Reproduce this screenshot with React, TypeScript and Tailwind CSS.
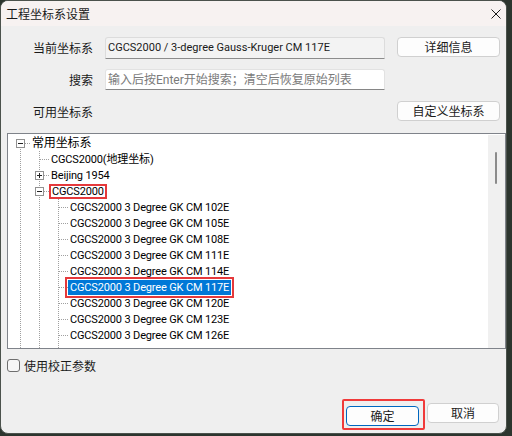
import type { ReactNode } from 'react';

// Tree rows of the coordinate-system picker
type Node = {
  level: number;
  text: string;
  kind: 'open' | 'closed' | 'leaf';
  cjk?: boolean;
  marked?: boolean;
  selected?: boolean;
};

const zones = ['102E', '105E', '108E', '111E', '114E', '117E', '120E', '123E', '126E'];

const rows: Node[] = [
  { level: 0, text: '常用坐标系', kind: 'open', cjk: true },
  { level: 1, text: 'CGCS2000(地理坐标)', kind: 'leaf' },
  { level: 1, text: 'Beijing 1954', kind: 'closed' },
  { level: 1, text: 'CGCS2000', kind: 'open', marked: true },
  ...zones.map((z) => ({
    level: 2,
    text: `CGCS2000 3 Degree GK CM ${z}`,
    kind: 'leaf' as const,
    selected: z === '117E',
  })),
];

const ui = "font-['Roboto','Noto_Sans_CJK_SC',sans-serif]";
const cjk = "font-['Noto_Sans_CJK_SC',sans-serif]";
const dots = { stroke: '#a0a0a0', strokeWidth: 1, strokeDasharray: '1 1' };

// Dotted guide lines + expander box drawn to the left of each tree label
function Guides({ node, first }: { node: Node; first: boolean }) {
  const w = 22 + 19 * node.level;
  const cx = 12.5 + 19 * node.level;
  return (
    <svg width={w} height={16} className="flex-none" shapeRendering="crispEdges">
      {Array.from({ length: node.level }).map((_, a) => (
        <line key={a} x1={12.5 + 19 * a} y1={0} x2={12.5 + 19 * a} y2={16} {...dots} />
      ))}
      <line x1={cx} y1={first ? 8 : 0} x2={cx} y2={16} {...dots} />
      <line x1={cx} y1={8.5} x2={w} y2={8.5} {...dots} />
      {node.kind !== 'leaf' && (
        <g>
          <rect x={cx - 4} y={4.5} width={8} height={8} fill="#fff" stroke="#919191" />
          <line x1={cx - 2.5} y1={8.5} x2={cx + 2.5} y2={8.5} stroke="#222" />
          {node.kind === 'closed' && <line x1={cx} y1={6} x2={cx} y2={11} stroke="#222" />}
        </g>
      )}
    </svg>
  );
}

function Btn({ children, className = '' }: { children: ReactNode; className?: string }) {
  return (
    <button
      className={`h-[20px] rounded-[4px] border bg-[#fdfdfd] text-[12px] leading-none text-[#1b1b1b] ${cjk} ${className}`}
    >
      {children}
    </button>
  );
}

export default function App() {
  return (
    <div className="h-[436px] w-[512px] bg-[#2c352e]">
      <div className="flex h-[434px] w-[507px] flex-col overflow-hidden rounded-lg border border-[#4b524c] bg-[#efefef]">
        {/* Title bar */}
        <div className="flex h-[25px] flex-none items-center justify-between bg-[#f7f2f1] pl-[5px] pr-[4px]">
          <span className={`text-[12px] leading-none text-[#1a1a1a] ${cjk}`}>工程坐标系设置</span>
          <svg width="10" height="10" viewBox="0 0 10 10" className="mr-[1px]">
            <path d="M0.5 0.5L9.5 9.5M9.5 0.5L0.5 9.5" stroke="#1a1a1a" strokeWidth="1" />
          </svg>
        </div>

        <div className="flex flex-1 flex-col pl-[6px]">
          {/* Current system */}
          <div className="mt-[11px] flex h-[22px] items-center">
            <span className={`w-[86px] text-right text-[12px] text-[#1a1a1a] ${cjk}`}>当前坐标系</span>
            <div
              className={`ml-[12px] flex h-[22px] w-[280px] items-center rounded-t-[3px] border border-[#dcdcdc] border-b-[#8c8c8c] bg-[#f3f3f3] pl-[2px] text-[11px] text-[#1a1a1a] ${ui}`}
            >
              CGCS2000 / 3-degree Gauss-Kruger CM 117E
            </div>
            <Btn className="ml-[12px] w-[103px] self-start border-[#d0d0d0]">详细信息</Btn>
          </div>

          {/* Search */}
          <div className="mt-[10px] flex h-[21px] items-center">
            <span className={`w-[86px] text-right text-[12px] text-[#1a1a1a] ${cjk}`}>搜索</span>
            <div
              className={`ml-[12px] flex h-[21px] w-[280px] items-center rounded-t-[3px] border border-[#e2e2e2] border-b-[#868686] bg-white pl-[2px] text-[12px] text-[#7a7a7a] ${ui}`}
            >
              输入后按Enter开始搜索；清空后恢复原始列表
            </div>
          </div>

          {/* Available systems */}
          <div className="mt-[11px] flex h-[21px] items-center">
            <span className={`w-[86px] text-right text-[12px] text-[#1a1a1a] ${cjk}`}>可用坐标系</span>
            <Btn className="ml-[304px] w-[103px] self-start border-[#d0d0d0]">自定义坐标系</Btn>
          </div>

          {/* Tree */}
          <div className="mt-[11px] flex h-[216px] w-[499px] overflow-hidden border border-[#7f838a] bg-white">
            <div className={`flex-1 overflow-hidden pt-[1px] text-[11px] text-black ${ui}`}>
              {rows.map((node, i) => (
                <div key={i} className="flex h-[16px] items-center">
                  <Guides node={node} first={i === 0} />
                  <span
                    className={`flex h-[15px] items-center whitespace-nowrap px-[2px] leading-none tracking-[-0.15px] ${
                      node.cjk ? 'text-[12px]' : ''
                    } ${node.marked ? 'ring-2 ring-inset ring-[#e5393b] px-[3px] h-[14px]' : ''} ${
                      node.selected ? 'bg-[#0078d7] text-white outline-2 outline-offset-[1px] outline-[#e5393b]' : ''
                    }`}
                  >
                    {node.text}
                  </span>
                </div>
              ))}
              {/* guides continue past the visible rows */}
              <svg width={60} height={16} shapeRendering="crispEdges">
                {[12.5, 31.5, 50.5].map((x) => (
                  <line key={x} x1={x} y1={0} x2={x} y2={16} {...dots} />
                ))}
              </svg>
            </div>
            <div className="mt-[1px] w-[17px] flex-none bg-[#f0f0f0]">
              <div className="ml-[7px] mt-[17px] h-[32px] w-[2px] rounded-full bg-[#8b8b8b]" />
            </div>
          </div>

          {/* Correction parameters */}
          <div className="mt-[10px] flex h-[13px] items-center">
            <div className="h-[13px] w-[13px] rounded-[3px] border border-[#6e6e6e] bg-[#f6f6f6]" />
            <span className={`ml-[4px] text-[12px] text-[#1a1a1a] ${cjk}`}>使用校正参数</span>
          </div>

          {/* Dialog buttons */}
          <div className="mt-[31px] flex justify-end pr-[7px]">
            <div className="relative">
              <Btn className="w-[73px] border-[#0067c0]">确定</Btn>
              <div className="pointer-events-none absolute -left-[4px] -top-[4px] h-[31px] w-[83px] rounded-[2px] border-2 border-[#f03a3a]" />
            </div>
            <Btn className="ml-[8px] w-[72px] border-[#d0d0d0]">取消</Btn>
          </div>
        </div>
      </div>
    </div>
  );
}
